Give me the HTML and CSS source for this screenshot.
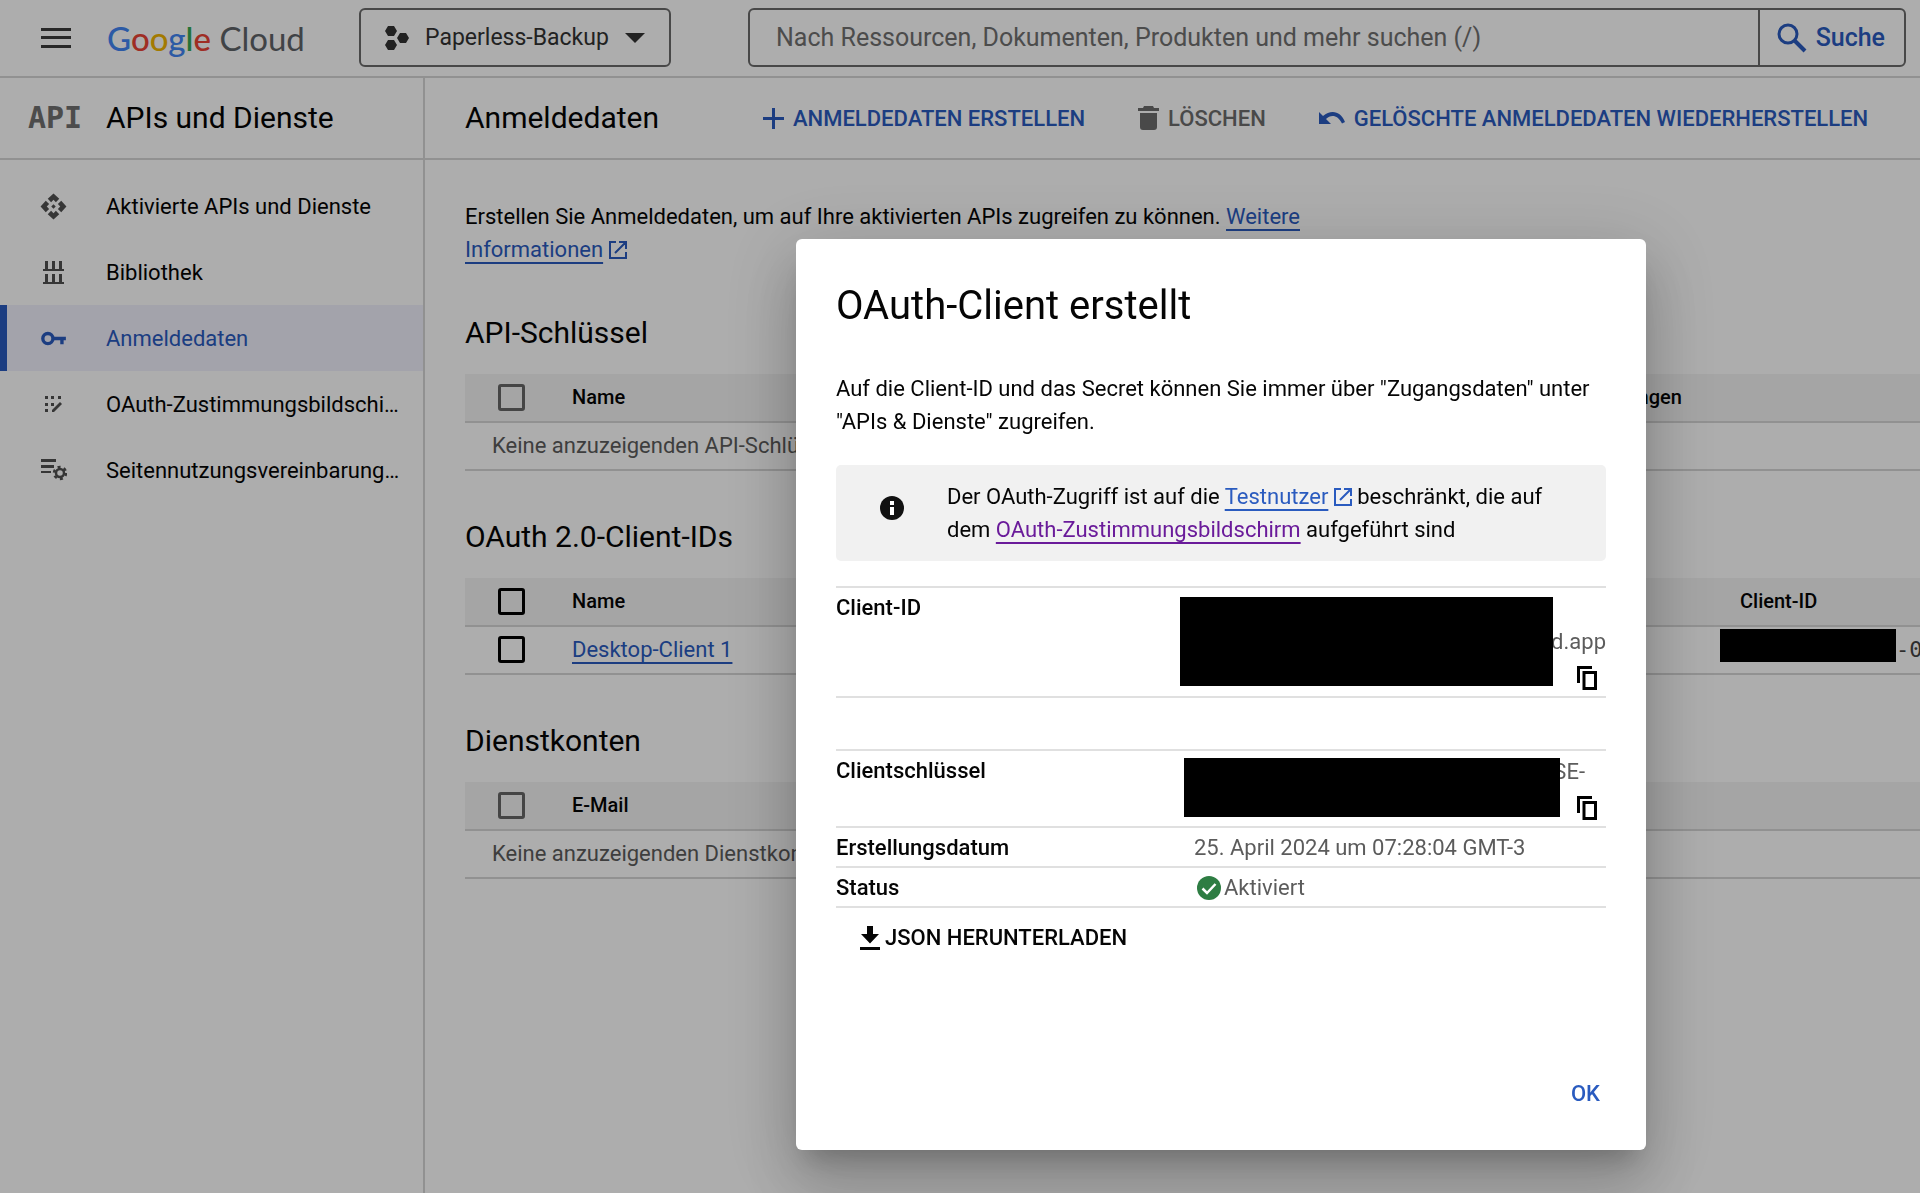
FILE: index.html
```html
<!DOCTYPE html>
<html lang="de">
<head>
<meta charset="utf-8">
<meta name="viewport" content="width=device-width, initial-scale=1">
<title>Anmeldedaten – APIs und Dienste – Google Cloud</title>
<link rel="stylesheet" href="styles.css">
</head>
<body>
<div class="app">
  <header class="topbar">
    <button class="icon-button menu-button" type="button" aria-label="Navigationsmenü">
      <svg width="30" height="20" viewBox="0 0 30 20" fill="currentColor"><path d="M0 0h30v3H0zM0 8h30v3H0zM0 17h30v3H0z"/></svg>
    </button>
    <a class="brand" href="#"><span class="b">G</span><span class="r">o</span><span class="y">o</span><span class="b">g</span><span class="g">l</span><span class="r">e</span> Cloud</a>
    <button class="project-picker" type="button">
      <svg width="24" height="24" viewBox="0 0 24 24" fill="currentColor"><path d="M3 0h6l3 5-3 5H3L0 5zM3 14h6l3 5-3 5H3l-3-5zM15 7h6l3 5-3 5h-6l-3-5z"/></svg>
      <span>Paperless-Backup</span>
      <svg width="20" height="10" viewBox="0 0 20 10" fill="currentColor"><path d="M0 0h20L10 10z"/></svg>
    </button>
    <form class="search" role="search">
      <input class="search-input" type="text" aria-label="Suche" placeholder="Nach Ressourcen, Dokumenten, Produkten und mehr suchen (/)">
      <button class="search-button" type="button">
        <svg width="30" height="30" viewBox="0 0 30 30" fill="none" stroke="currentColor" stroke-width="3"><circle cx="11" cy="11" r="9"/><path d="M17.500 17.500 28 28" stroke-width="4"/></svg>
        <span>Suche</span>
      </button>
    </form>
  </header>

  <div class="body">
    <aside class="sidebar">
      <div class="product">
        <span class="product-mark" aria-hidden="true">API</span>
        <span class="heading">APIs und Dienste</span>
      </div>
      <nav class="nav">
        <a class="nav-item" href="#">
          <svg width="27" height="27" viewBox="0 0 24 24" fill="currentColor"><path d="M14 12l-2 2-2-2 2-2 2 2zm-2-6l2.120 2.120 3-3L12 0.500 6.880 5.120l3 3L12 6zm-6 6l2.120-2.120-3-3L0.500 12l4.620 5.120 3-3L6 12zm12 0l-2.120 2.120 3 3L23.500 12l-4.620-5.120-3 3L18 12zm-6 6l-2.120-2.120-3 3L12 23.500l5.120-4.620-3-3L12 18z"/></svg>
          <span>Aktivierte APIs und Dienste</span>
        </a>
        <a class="nav-item" href="#">
          <svg width="27" height="27" viewBox="0 0 27 27" fill="currentColor"><path d="M5 2h3v8h4V2h3v8h4V2h3v8h2v2H3v-2h2zM5 15h3v8h4v-8h3v8h4v-8h3v8h2v2H3v-2h2z"/></svg>
          <span>Bibliothek</span>
        </a>
        <a class="nav-item is-active" href="#" aria-current="page">
          <svg width="27" height="27" viewBox="0 0 24 24" fill="none" stroke="currentColor" stroke-width="3"><circle cx="7" cy="12" r="4.500"/><path d="M11 12h12M19.500 12v5"/></svg>
          <span>Anmeldedaten</span>
        </a>
        <a class="nav-item" href="#">
          <svg width="27" height="27" viewBox="0 0 27 27" fill="currentColor"><path d="M5 5h3v3H5zM11 5h3v3h-3zM18 5h3v3h-3zM5 12h3v3H5zM11 12h3v3h-3zM5 18h3v3H5zM20 11l2 2-8 8h-2v-2z"/></svg>
          <span>OAuth-Zustimmungsbildschirm</span>
        </a>
        <a class="nav-item" href="#">
          <svg width="27" height="27" viewBox="0 0 27 27" fill="currentColor"><path d="M1 2h15v3H1zM1 8h13v3H1zM1 14h10v2H1z"/><g fill="none" stroke="currentColor"><circle cx="20" cy="16" r="4" stroke-width="2.500"/><circle cx="20" cy="16" r="6" stroke-width="2.500" stroke-dasharray="3 3.280"/></g></svg>
          <span>Seitennutzungsvereinbarungen</span>
        </a>
      </nav>
    </aside>

    <main class="main">
      <div class="page-header">
        <h1 class="heading page-title">Anmeldedaten</h1>
        <div class="actions">
          <button class="action" type="button">
            <svg width="21" height="21" viewBox="0 0 21 21" fill="currentColor"><path d="M9 0h3v9h9v3h-9v9H9v-9H0V9h9z"/></svg>
            ANMELDEDATEN ERSTELLEN
          </button>
          <button class="action is-muted" type="button">
            <svg width="21" height="24" viewBox="0 0 21 24" fill="currentColor"><path d="M6 0h9l1 2h5v3H0V2h5zM2 7h17v14q0 3-3 3H5q-3 0-3-3z"/></svg>
            LÖSCHEN
          </button>
          <button class="action" type="button">
            <svg width="26" height="14" viewBox="0 0 26 14" fill="currentColor"><path d="M0 1l4 4C12-2 22 0 26 11l-3 1.500C19 4 12 3 7 8l5 5H0z"/></svg>
            GELÖSCHTE ANMELDEDATEN WIEDERHERSTELLEN
          </button>
        </div>
      </div>

      <div class="content">
        <p class="intro">Erstellen Sie Anmeldedaten, um auf Ihre aktivierten APIs zugreifen zu können. <a class="link" href="#">Weitere Informationen</a> <svg class="external" width="18" height="18" viewBox="0 0 18 18" fill="none" stroke="currentColor" stroke-width="2"><path d="M7 1H1v16h16v-6M10 1h7v7M17 1 6 12"/></svg></p>

        <section class="group">
          <h2 class="heading">API-Schlüssel</h2>
          <table class="grid">
            <colgroup><col class="col-check"><col><col class="col-limits"></colgroup>
            <thead><tr><th><input class="check" type="checkbox" disabled aria-label="Alle API-Schlüssel auswählen"></th><th>Name</th><th>Einschränkungen</th></tr></thead>
            <tbody><tr><td class="empty" colspan="3">Keine anzuzeigenden API-Schlüssel</td></tr></tbody>
          </table>
        </section>

        <section class="group">
          <h2 class="heading">OAuth 2.0-Client-IDs</h2>
          <table class="grid">
            <colgroup><col class="col-check"><col><col class="col-id"></colgroup>
            <thead><tr><th><input class="check" type="checkbox" aria-label="Alle Clients auswählen"></th><th>Name</th><th class="id-head">Client-ID</th></tr></thead>
            <tbody><tr><td><input class="check" type="checkbox" aria-label="Desktop-Client 1 auswählen"></td><td><a class="link" href="#">Desktop-Client 1</a></td><td><div class="id-cell"><span class="id-mask"></span><span class="mono">-0</span></div></td></tr></tbody>
          </table>
        </section>

        <section class="group">
          <h2 class="heading">Dienstkonten</h2>
          <table class="grid">
            <colgroup><col class="col-check"><col></colgroup>
            <thead><tr><th><input class="check" type="checkbox" disabled aria-label="Alle Dienstkonten auswählen"></th><th>E-Mail</th></tr></thead>
            <tbody><tr><td class="empty" colspan="2">Keine anzuzeigenden Dienstkonten</td></tr></tbody>
          </table>
        </section>
      </div>
    </main>
  </div>
</div>

<div class="scrim">
  <div class="dialog" role="dialog" aria-modal="true" aria-labelledby="dialog-title">
    <h2 class="dialog-title" id="dialog-title">OAuth-Client erstellt</h2>
    <p class="dialog-text">Auf die Client-ID und das Secret können Sie immer über "Zugangsdaten" unter "APIs &amp; Dienste" zugreifen.</p>
    <div class="notice">
      <svg width="24" height="24" viewBox="0 0 24 24"><circle cx="12" cy="12" r="12" fill="#111"/><path d="M10 5h4v4h-4zM10 11h4v8h-4z" fill="#fff"/></svg>
      <p>Der OAuth-Zugriff ist auf die <a class="link" href="#">Testnutzer</a> <svg class="external" width="18" height="18" viewBox="0 0 18 18" fill="none" stroke="currentColor" stroke-width="2"><path d="M7 1H1v16h16v-6M10 1h7v7M17 1 6 12"/></svg> beschränkt, die auf dem <a class="link is-visited" href="#">OAuth-Zustimmungsbildschirm</a> aufgeführt sind</p>
    </div>

    <dl class="details is-single">
      <div class="detail is-id">
        <dt>Client-ID</dt>
        <dd><span class="mask"></span><span class="tail">d.app</span>
          <button class="icon-button copy" type="button" aria-label="Client-ID kopieren"><svg width="20" height="24" viewBox="0 0 20 24" fill="none" stroke="currentColor" stroke-width="3"><path d="M1.500 17V1.500H15"/><path d="M7 6.500h11.500v16H7z"/></svg></button>
        </dd>
      </div>
    </dl>
    <dl class="details">
      <div class="detail is-secret">
        <dt>Clientschlüssel</dt>
        <dd><span class="mask"></span><span class="tail">SE-</span>
          <button class="icon-button copy" type="button" aria-label="Clientschlüssel kopieren"><svg width="20" height="24" viewBox="0 0 20 24" fill="none" stroke="currentColor" stroke-width="3"><path d="M1.500 17V1.500H15"/><path d="M7 6.500h11.500v16H7z"/></svg></button>
        </dd>
      </div>
      <div class="detail"><dt>Erstellungsdatum</dt><dd>25. April 2024 um 07:28:04 GMT-3</dd></div>
      <div class="detail"><dt>Status</dt><dd class="status"><svg width="24" height="24" viewBox="0 0 24 24"><circle cx="12" cy="12" r="12" fill="#2e7d43"/><path d="M5.500 12.500l4.500 4.500 8.500-9" fill="none" stroke="#fff" stroke-width="2.500"/></svg>Aktiviert</dd></div>
    </dl>
    <button class="download" type="button">
      <svg width="20" height="24" viewBox="0 0 20 24" fill="currentColor"><path d="M7 0h6v8h6l-9 9.500L1 8h6zM0 21h20v3H0z"/></svg>
      JSON HERUNTERLADEN
    </button>
    <div class="dialog-actions"><button class="ok" type="button">OK</button></div>
  </div>
</div>
</body>
</html>
```
FILE: styles.css
```css
* { box-sizing: border-box; }

:root {
  --ink: #050505;
  --grey: #5c5c5c;
  --blue: #2a5bbf;
  --line: #d6d6d6;
}

body {
  margin: 0;
  background: #fff;
  color: var(--ink);
  font: 22px/33px Roboto, "Liberation Sans", sans-serif;
  overflow: hidden;
}

h1, h2, p, dl, dd { margin: 0; }

svg { flex: none; display: block; }

button, input { font: inherit; color: inherit; }

button {
  margin: 0;
  padding: 0;
  border: 0;
  background: none;
  cursor: pointer;
}

.app {
  display: flex;
  flex-direction: column;
  min-height: 100vh;
}

.heading {
  font-size: 30px;
  line-height: 40px;
  font-weight: 400;
}

.link {
  color: var(--blue);
  text-decoration: underline;
  text-decoration-thickness: 2px;
  text-underline-offset: 5px;
  text-decoration-skip-ink: none;
}

.link.is-visited { color: #6a1b9a; }

.external {
  display: inline-block;
  vertical-align: -2px;
  color: var(--blue);
}

/* Top bar */

.topbar {
  display: flex;
  align-items: center;
  height: 78px;
  padding: 0 14px 1px 41px;
  border-bottom: 2px solid var(--line);
}

.menu-button { color: #3c3c3c; }

.brand {
  width: 251px;
  padding-left: 36px;
  flex: none;
  color: #5f6368;
  font: 33px/44px Lato, sans-serif;
  text-decoration: none;
  white-space: nowrap;
}

.brand .b { color: #4285f4; }
.brand .r { color: #ea4335; }
.brand .y { color: #f0b400; }
.brand .g { color: #34a853; }

.brand span { font-weight: 500; }

.project-picker {
  display: flex;
  align-items: center;
  gap: 16px;
  flex: none;
  width: 312px;
  height: 59px;
  margin: 0 77px 0 37px;
  padding: 0 24px;
  border: 2px solid #6a6a6a;
  border-radius: 6px;
  color: #333;
  font-size: 23px;
  white-space: nowrap;
}

.search {
  display: flex;
  flex: 1;
  height: 59px;
  border: 2px solid #6a6a6a;
  border-radius: 6px;
}

.search-input {
  flex: 1;
  min-width: 0;
  padding: 0 26px;
  border: 0;
  outline: 0;
  background: none;
  font-size: 25px;
}

.search-input::placeholder { color: #707070; opacity: 1; }

.search-button {
  display: flex;
  align-items: center;
  gap: 9px;
  padding: 0 19px 0 17px;
  border-left: 2px solid #6a6a6a;
  color: var(--blue);
  font-size: 25px;
  font-weight: 500;
}

/* Sidebar */

.body {
  display: flex;
  flex: 1;
}

.sidebar {
  flex: none;
  width: 425px;
  border-right: 2px solid var(--line);
}

.product {
  display: flex;
  align-items: center;
  height: 82px;
  padding-left: 28px;
  border-bottom: 2px solid var(--line);
}

.product-mark {
  width: 78px;
  color: #707070;
  font: 700 30px/40px "DejaVu Sans Mono", monospace;
}

.nav { padding-top: 13px; }

.nav-item {
  display: flex;
  align-items: center;
  gap: 39px;
  height: 66px;
  padding: 0 22px 0 33px;
  border-left: 7px solid transparent;
  color: var(--ink);
  text-decoration: none;
}

.nav-item svg { color: #505050; }

.nav-item span {
  overflow: hidden;
  text-overflow: ellipsis;
  white-space: nowrap;
}

.nav-item.is-active {
  background: #f0f0fd;
  border-left-color: var(--blue);
  color: var(--blue);
}

.nav-item.is-active svg { color: var(--blue); }

/* Page */

.main {
  flex: 1;
  min-width: 0;
}

.page-header {
  display: flex;
  align-items: center;
  height: 82px;
  padding-left: 40px;
  border-bottom: 2px solid var(--line);
}

.page-title { width: 298px; }

.actions { display: flex; gap: 53px; }

.action {
  display: flex;
  align-items: center;
  gap: 9px;
  color: var(--blue);
  font-weight: 500;
  white-space: nowrap;
}

.action.is-muted { color: #6c6c6c; }

.content { padding: 40px 0 0 40px; }

.intro {
  max-width: 845px;
  margin-bottom: 1px;
}

.group { padding-top: 46px; }

.group .heading { margin-bottom: 21px; }

.grid {
  width: 100%;
  table-layout: fixed;
  border-collapse: collapse;
}

.col-check { width: 107px; }
.col-limits { width: 392px; }
.col-id { width: 200px; }

.grid th,
.grid td {
  height: 48px;
  padding: 0;
  border-bottom: 2px solid var(--line);
  text-align: left;
  white-space: nowrap;
}

.grid td { padding-bottom: 2px; }

.grid th {
  background: #f4f4f4;
  font-size: 20px;
  font-weight: 500;
}

.grid .empty {
  padding-left: 27px;
  color: var(--grey);
}

.grid .id-head { padding-left: 20px; }

.check {
  appearance: none;
  display: block;
  width: 27px;
  height: 27px;
  margin: 0 0 0 33px;
  border: 3px solid #000;
  border-radius: 3px;
}

.check:disabled { border-color: #666; }

.id-cell {
  display: flex;
  align-items: center;
  height: 40px;
  overflow: hidden;
}

.id-mask {
  flex: none;
  align-self: flex-start;
  width: 176px;
  height: 33px;
  background: #000;
}

.mono {
  color: #444;
  font: 22px/33px "DejaVu Sans Mono", monospace;
}

/* Dialog */

.scrim {
  position: fixed;
  inset: 0;
  display: flex;
  justify-content: flex-end;
  align-items: flex-start;
  padding: 239px 274px 0 0;
  background: rgba(0, 0, 0, .32);
}

.dialog {
  display: flex;
  flex-direction: column;
  width: 850px;
  min-height: 911px;
  padding: 40px;
  border-radius: 6px;
  background: #fff;
  box-shadow: 0 18px 24px -11px rgba(0, 0, 0, .2),
    0 38px 60px 5px rgba(0, 0, 0, .14),
    0 14px 74px 13px rgba(0, 0, 0, .12);
}

.dialog-title {
  font-size: 40px;
  line-height: 54px;
  font-weight: 400;
}

.dialog-text { margin-top: 39px; }

.notice {
  display: flex;
  gap: 43px;
  margin-top: 27px;
  padding: 15px 44px;
  border-radius: 5px;
  background: #f1f1f1;
}

.notice > svg { margin-top: 16px; }

.details { border-top: 2px solid #e0e0e0; }

.details.is-single { margin: 25px 0 51px; }

.detail {
  display: flex;
  padding: 3px 0 2px;
  border-bottom: 2px solid #e0e0e0;
}

.detail dt {
  flex: none;
  width: 358px;
  font-weight: 500;
}

.detail dd {
  position: relative;
  flex: 1;
  color: var(--grey);
}

.detail.is-id { height: 110px; }

.detail.is-secret { height: 77px; }

.is-id dd,
.is-secret dd {
  display: flex;
  flex-direction: column;
  align-items: flex-end;
  justify-content: flex-end;
}

.is-secret .tail { padding-right: 21px; }

.mask {
  position: absolute;
  background: #000;
}

.is-id .mask {
  top: 6px;
  left: -14px;
  width: 373px;
  height: 89px;
}

.is-secret .mask {
  top: 4px;
  left: -10px;
  width: 376px;
  height: 59px;
}

.copy {
  margin: 8px 9px 4px 0;
  color: #000;
}

.status {
  display: flex;
  align-items: center;
  gap: 3px;
  padding-left: 3px;
}

.download {
  display: flex;
  align-items: center;
  gap: 5px;
  margin: 13px 0 0 24px;
  font-weight: 500;
}

.dialog-actions {
  display: flex;
  justify-content: flex-end;
  margin-top: auto;
}

.ok {
  padding: 0 6px;
  color: var(--blue);
  font-weight: 500;
}
```
